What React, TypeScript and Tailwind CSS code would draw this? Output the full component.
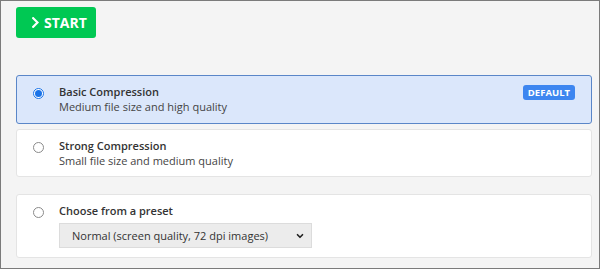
import { ChevronDown } from "lucide-react";

interface Option {
  id: string;
  title: string;
  subtitle: string;
  isDefault?: boolean;
}

const options: Option[] = [
  { id: "basic", title: "Basic Compression", subtitle: "Medium file size and high quality", isDefault: true },
  { id: "strong", title: "Strong Compression", subtitle: "Small file size and medium quality" },
];

function Radio({ checked }: { checked: boolean }) {
  return checked ? (
    <span className="flex h-[11px] w-[11px] items-center justify-center rounded-full border border-[#1a73e8] bg-white">
      <span className="h-[7px] w-[7px] rounded-full bg-[#1a73e8]" />
    </span>
  ) : (
    <span className="block h-[11px] w-[11px] rounded-full border border-[#8a8a8a] bg-white" />
  );
}

export default function App() {
  const selected = "basic";
  return (
    <div
      className="h-[269px] w-[600px] border border-[#7b7b7b] bg-[#f4f4f4] pl-[15px] pr-[7px] pt-[6px] text-[#333]"
      style={{ fontFamily: '"Open Sans", "Liberation Sans", sans-serif' }}
    >
      <button className="flex h-[31px] w-[80px] items-center gap-[5px] rounded-[3px] bg-[#00c853] pl-[16px] text-[14px] font-bold text-white">
        <svg width="7" height="11" viewBox="0 0 7 11" fill="none">
          <path d="M1.2 1.2 L5.5 5.5 L1.2 9.8" stroke="white" strokeWidth="2.2" strokeLinecap="square" />
        </svg>
        START
      </button>

      <div className="mt-[37px] flex flex-col gap-[5px]">
        {options.map((opt) => {
          const active = opt.id === selected;
          return (
            <div
              key={opt.id}
              className={
                active
                  ? "flex h-[49px] items-start rounded-[3px] border border-[#5a86c8] bg-[#dbe7fb] pr-[16px] pt-[8px]"
                  : "flex h-[48px] items-start rounded-[3px] border border-[#e4e4e4] bg-white pr-[16px] pt-[8px]"
              }
            >
              <div className="flex w-[42px] justify-center pl-[1px] pt-[4px]">
                <Radio checked={active} />
              </div>
              <div className="flex-1 text-[11px] leading-[15px]">
                <div className="font-semibold text-[#333]">{opt.title}</div>
                <div className="text-[#444]">{opt.subtitle}</div>
              </div>
              {opt.isDefault && (
                <span className="mt-[1px] rounded-[3px] bg-[#3d86f0] px-[5px] text-[9.5px] font-bold leading-[15px] text-white">
                  DEFAULT
                </span>
              )}
            </div>
          );
        })}
      </div>

      <div className="mt-[17px] flex h-[64px] rounded-[3px] border border-[#e4e4e4] bg-white pt-[8px]">
        <div className="flex w-[42px] justify-center pl-[1px] pt-[4px]">
          <Radio checked={false} />
        </div>
        <div className="text-[11px] leading-[15px]">
          <div className="font-semibold text-[#333]">Choose from a preset</div>
          <div className="mt-[5px] flex h-[25px] w-[253px] items-center justify-between border border-[#dcdcdc] bg-[#ececec] pl-[12px] pr-[6px] text-[#333]">
            <span>Normal (screen quality, 72 dpi images)</span>
            <ChevronDown className="h-[10px] w-[10px] text-[#222]" strokeWidth={4} />
          </div>
        </div>
      </div>
    </div>
  );
}
